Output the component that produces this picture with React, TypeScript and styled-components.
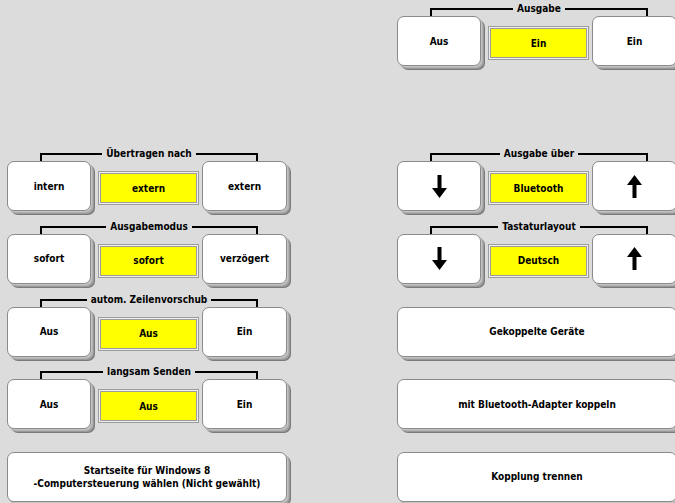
import styled, { createGlobalStyle } from "styled-components";

const GlobalStyle = createGlobalStyle`
  html, body {
    margin: 0;
    padding: 0;
    background: #dcdcdc;
    overflow: hidden;
  }
  body {
    font-family: "DejaVu Sans Condensed", "DejaVu Sans", sans-serif;
    font-weight: bold;
    font-size: 10px;
    color: #000;
  }
`;

type Toggle = {
  kind: "toggle";
  title: string;
  left: string;
  value: string;
  right: string;
  arrows?: boolean;
};
type Action = { kind: "action"; lines: string[] };
type Blank = { kind: "blank" };
type Cell = Toggle | Action | Blank;

const leftColumn: Cell[] = [
  { kind: "blank" },
  { kind: "blank" },
  { kind: "toggle", title: "Übertragen nach", left: "intern", value: "extern", right: "extern" },
  { kind: "toggle", title: "Ausgabemodus", left: "sofort", value: "sofort", right: "verzögert" },
  { kind: "toggle", title: "autom. Zeilenvorschub", left: "Aus", value: "Aus", right: "Ein" },
  { kind: "toggle", title: "langsam Senden", left: "Aus", value: "Aus", right: "Ein" },
  { kind: "action", lines: ["Startseite für Windows 8", "-Computersteuerung wählen (Nicht gewählt)"] },
];

const rightColumn: Cell[] = [
  { kind: "toggle", title: "Ausgabe", left: "Aus", value: "Ein", right: "Ein" },
  { kind: "blank" },
  { kind: "toggle", title: "Ausgabe über", left: "down", value: "Bluetooth", right: "up", arrows: true },
  { kind: "toggle", title: "Tastaturlayout", left: "down", value: "Deutsch", right: "up", arrows: true },
  { kind: "action", lines: ["Gekoppelte Geräte"] },
  { kind: "action", lines: ["mit Bluetooth-Adapter koppeln"] },
  { kind: "action", lines: ["Kopplung trennen"] },
];

// fat arrow as used on the layout/output switch buttons
const Arrow = ({ up }: { up?: boolean }) => (
  <svg width="15" height="23" viewBox="0 0 15 23">
    <g transform={up ? "rotate(180 7.5 11.5)" : undefined}>
      <rect x="5.5" y="0" width="4" height="14" fill="#000" />
      <polygon points="0,13 15,13 7.5,23" fill="#000" />
    </g>
  </svg>
);

const renderCell = (cell: Cell, i: number) => {
  if (cell.kind === "blank") return <Slot key={i} />;
  if (cell.kind === "action")
    return (
      <Slot key={i}>
        <Spacer />
        <WideButton>
          {cell.lines.map((l) => (
            <div key={l}>{l}</div>
          ))}
        </WideButton>
      </Slot>
    );
  return (
    <Slot key={i}>
      <Bracket>
        <BracketSide $side="left" />
        <BracketLabel>{cell.title}</BracketLabel>
        <BracketSide $side="right" />
      </Bracket>
      <ToggleRow>
        <SideButton>{cell.arrows ? <Arrow /> : cell.left}</SideButton>
        <ValueBox>
          <ValueInner>{cell.value}</ValueInner>
        </ValueBox>
        <SideButton>{cell.arrows ? <Arrow up /> : cell.right}</SideButton>
      </ToggleRow>
    </Slot>
  );
};

const App = () => {
  return (
    <>
      <GlobalStyle />
      <Page>
        <Column>{leftColumn.map(renderCell)}</Column>
        <Column>{rightColumn.map(renderCell)}</Column>
      </Page>
    </>
  );
};

export default App;

const Page = styled.div`
  display: flex;
  gap: 106px;
  padding-left: 7px;
  width: 675px;
  height: 503px;
  box-sizing: border-box;
  overflow: hidden;
`;

const Column = styled.div`
  display: grid;
  grid-template-columns: 284px;
  grid-auto-rows: 72.667px;
  width: 284px;
  flex-shrink: 0;
`;

const Slot = styled.div`
  display: flex;
  flex-direction: column;
`;

const Spacer = styled.div`
  height: 16px;
`;

const Bracket = styled.div`
  display: flex;
  align-items: flex-start;
  height: 16px;
  padding: 0 33px 0 33px;
`;

const BracketSide = styled.div<{ $side: "left" | "right" }>`
  flex: 1;
  margin-top: 8px;
  height: 7px;
  border-top: 2px solid #000;
  ${(p) => (p.$side === "left" ? "border-left: 2px solid #000;" : "border-right: 2px solid #000;")}
`;

const BracketLabel = styled.div`
  padding: 0 4px;
  line-height: 18px;
  white-space: nowrap;
`;

const ToggleRow = styled.div`
  display: grid;
  grid-template-columns: 88px 101px 89px;
  column-gap: 3px;
  align-items: center;
  height: 54px;
`;

const ButtonBase = styled.div`
  box-sizing: border-box;
  height: 50px;
  align-self: start;
  background: #fff;
  border: 1px solid #8a8a8a;
  border-radius: 7px;
  box-shadow: 1px 1px 0 #c4c4c4, 2px 2px 0 #b0b0b0, 3px 3px 0 #9a9a9a,
    4px 4px 0 #7a7a7a;
  display: flex;
  align-items: center;
  justify-content: center;
  text-align: center;
`;

const SideButton = styled(ButtonBase)`
  width: calc(100% - 4px);
`;

const WideButton = styled(ButtonBase)`
  width: 280px;
  flex-direction: column;
  line-height: 13px;
`;

const ValueBox = styled.div`
  box-sizing: border-box;
  height: 34px;
  border: 1px solid #9c9c9c;
  background: #efefef;
  padding: 1px;
`;

const ValueInner = styled.div`
  box-sizing: border-box;
  height: 100%;
  border: 1px solid #9c9c9c;
  background: #ffff00;
  display: flex;
  align-items: center;
  justify-content: center;
`;
